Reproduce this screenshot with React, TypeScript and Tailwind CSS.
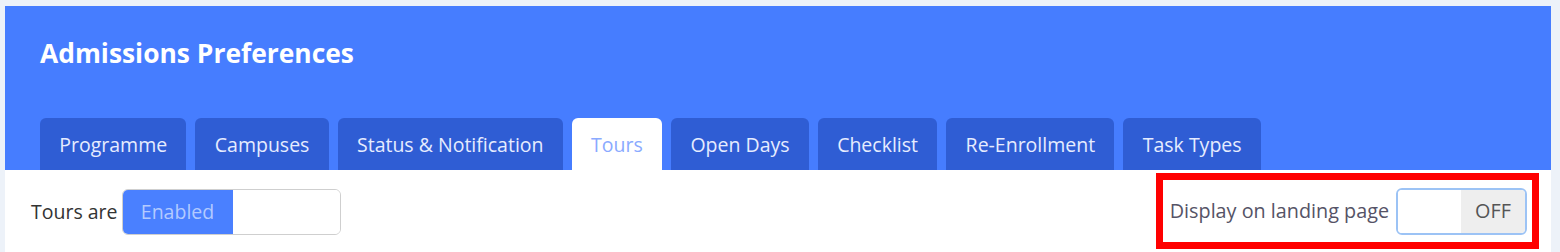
const tabs = ['Programme', 'Campuses', 'Status & Notification', 'Tours', 'Open Days', 'Checklist', 'Re-Enrollment', 'Task Types']

export default function App() {
  const font = { fontFamily: '"Open Sans", "Noto Sans", sans-serif' }
  return (
    <div className="h-[252px] bg-[#edf2f9] pl-[5px] pr-[9px] pt-[6px]" style={font}>
      <div className="flex h-full flex-col bg-white">
        {/* Header */}
        <div className="flex h-[164px] flex-col justify-between bg-[#467dff]">
          <h1 className="pl-[35px] pt-[29px] text-[26.4px] font-bold leading-[36px] text-white">Admissions Preferences</h1>
          <div className="flex items-end gap-[9px] pl-[35px]">
            {tabs.map((t) => (
              <div
                key={t}
                className={
                  t === 'Tours'
                    ? 'flex h-[52px] items-center rounded-t-[6px] bg-white px-[19.3px] pt-[2px] text-[19.5px] text-[#8aaaff]'
                    : 'flex h-[52px] items-center rounded-t-[6px] bg-[#2f5dd4] px-[19.3px] pt-[2px] text-[19.5px] text-[#e6ecff]'
                }
              >
                {t}
              </div>
            ))}
          </div>
        </div>

        {/* Content row */}
        <div className="flex flex-1 items-center justify-between pl-[26px] pr-[12px]">
          <div className="flex items-center gap-[4px] pt-[2px] text-[19.5px] text-[#333]">
            <span>Tours are</span>
            <div className="flex h-[46px] w-[219px] overflow-hidden rounded-[6px] border border-[#cfcfcf]">
              <div className="flex w-[110px] items-center justify-center bg-[#4a80ff] text-[#b3caff]">Enabled</div>
              <div className="flex-1 bg-white" />
            </div>
          </div>
          <div className="flex h-[76px] items-center gap-[7px] border-[7px] border-[#ff0000] pl-[7px] pr-[5px] text-[19.8px] text-[#555366]">
            <span>Display on landing page</span>
            <div className="flex h-[47px] w-[131px] overflow-hidden rounded-[6px] border-2 border-[#9cc3f5]">
              <div className="flex-1 bg-white" />
              <div className="flex w-[64px] items-center justify-center bg-[#eeeeee] text-[#555]">OFF</div>
            </div>
          </div>
        </div>
      </div>
    </div>
  )
}
